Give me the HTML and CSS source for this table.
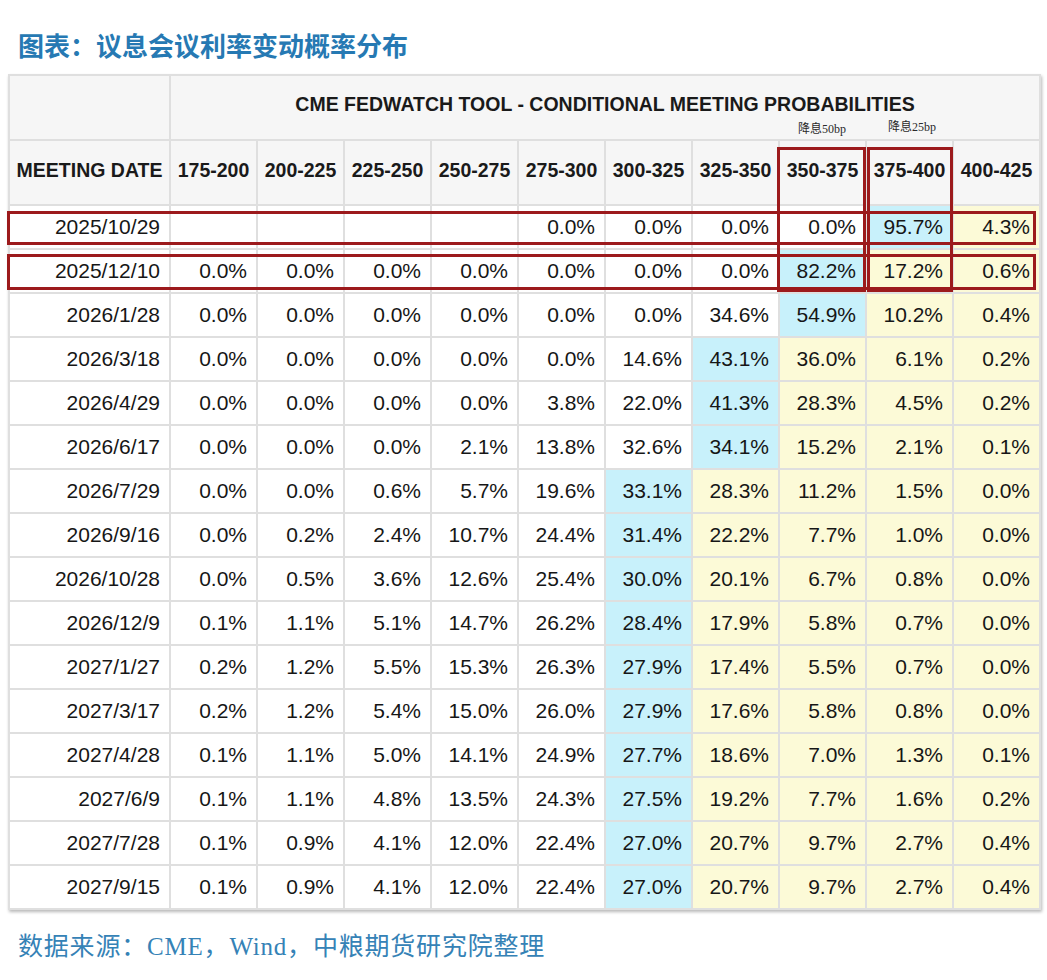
FILE: index.html
```html
<!DOCTYPE html>
<html lang="zh-CN">
<head>
<meta charset="utf-8">
<title>议息会议利率变动概率分布</title>
<link rel="stylesheet" href="styles.css">
</head>
<body>
<h1 class="title">图表：议息会议利率变动概率分布</h1>
<div class="chart">
  <div class="grid">
    <div class="hd hd-blank"></div>
    <div class="hd hd-main">CME FEDWATCH TOOL - CONDITIONAL MEETING PROBABILITIES</div>
    <div class="hd hd-col">MEETING DATE</div>
    <div class="hd hd-col">175-200</div>
    <div class="hd hd-col">200-225</div>
    <div class="hd hd-col">225-250</div>
    <div class="hd hd-col">250-275</div>
    <div class="hd hd-col">275-300</div>
    <div class="hd hd-col">300-325</div>
    <div class="hd hd-col">325-350</div>
    <div class="hd hd-col">350-375</div>
    <div class="hd hd-col">375-400</div>
    <div class="hd hd-col">400-425</div>

    <div class="cell">2025/10/29</div><div class="cell"></div><div class="cell"></div><div class="cell"></div><div class="cell"></div><div class="cell">0.0%</div><div class="cell">0.0%</div><div class="cell">0.0%</div><div class="cell">0.0%</div><div class="cell c">95.7%</div><div class="cell y">4.3%</div>
    <div class="cell">2025/12/10</div><div class="cell">0.0%</div><div class="cell">0.0%</div><div class="cell">0.0%</div><div class="cell">0.0%</div><div class="cell">0.0%</div><div class="cell">0.0%</div><div class="cell">0.0%</div><div class="cell c">82.2%</div><div class="cell y">17.2%</div><div class="cell y">0.6%</div>
    <div class="cell">2026/1/28</div><div class="cell">0.0%</div><div class="cell">0.0%</div><div class="cell">0.0%</div><div class="cell">0.0%</div><div class="cell">0.0%</div><div class="cell">0.0%</div><div class="cell">34.6%</div><div class="cell c">54.9%</div><div class="cell y">10.2%</div><div class="cell y">0.4%</div>
    <div class="cell">2026/3/18</div><div class="cell">0.0%</div><div class="cell">0.0%</div><div class="cell">0.0%</div><div class="cell">0.0%</div><div class="cell">0.0%</div><div class="cell">14.6%</div><div class="cell c">43.1%</div><div class="cell y">36.0%</div><div class="cell y">6.1%</div><div class="cell y">0.2%</div>
    <div class="cell">2026/4/29</div><div class="cell">0.0%</div><div class="cell">0.0%</div><div class="cell">0.0%</div><div class="cell">0.0%</div><div class="cell">3.8%</div><div class="cell">22.0%</div><div class="cell c">41.3%</div><div class="cell y">28.3%</div><div class="cell y">4.5%</div><div class="cell y">0.2%</div>
    <div class="cell">2026/6/17</div><div class="cell">0.0%</div><div class="cell">0.0%</div><div class="cell">0.0%</div><div class="cell">2.1%</div><div class="cell">13.8%</div><div class="cell">32.6%</div><div class="cell c">34.1%</div><div class="cell y">15.2%</div><div class="cell y">2.1%</div><div class="cell y">0.1%</div>
    <div class="cell">2026/7/29</div><div class="cell">0.0%</div><div class="cell">0.0%</div><div class="cell">0.6%</div><div class="cell">5.7%</div><div class="cell">19.6%</div><div class="cell c">33.1%</div><div class="cell y">28.3%</div><div class="cell y">11.2%</div><div class="cell y">1.5%</div><div class="cell y">0.0%</div>
    <div class="cell">2026/9/16</div><div class="cell">0.0%</div><div class="cell">0.2%</div><div class="cell">2.4%</div><div class="cell">10.7%</div><div class="cell">24.4%</div><div class="cell c">31.4%</div><div class="cell y">22.2%</div><div class="cell y">7.7%</div><div class="cell y">1.0%</div><div class="cell y">0.0%</div>
    <div class="cell">2026/10/28</div><div class="cell">0.0%</div><div class="cell">0.5%</div><div class="cell">3.6%</div><div class="cell">12.6%</div><div class="cell">25.4%</div><div class="cell c">30.0%</div><div class="cell y">20.1%</div><div class="cell y">6.7%</div><div class="cell y">0.8%</div><div class="cell y">0.0%</div>
    <div class="cell">2026/12/9</div><div class="cell">0.1%</div><div class="cell">1.1%</div><div class="cell">5.1%</div><div class="cell">14.7%</div><div class="cell">26.2%</div><div class="cell c">28.4%</div><div class="cell y">17.9%</div><div class="cell y">5.8%</div><div class="cell y">0.7%</div><div class="cell y">0.0%</div>
    <div class="cell">2027/1/27</div><div class="cell">0.2%</div><div class="cell">1.2%</div><div class="cell">5.5%</div><div class="cell">15.3%</div><div class="cell">26.3%</div><div class="cell c">27.9%</div><div class="cell y">17.4%</div><div class="cell y">5.5%</div><div class="cell y">0.7%</div><div class="cell y">0.0%</div>
    <div class="cell">2027/3/17</div><div class="cell">0.2%</div><div class="cell">1.2%</div><div class="cell">5.4%</div><div class="cell">15.0%</div><div class="cell">26.0%</div><div class="cell c">27.9%</div><div class="cell y">17.6%</div><div class="cell y">5.8%</div><div class="cell y">0.8%</div><div class="cell y">0.0%</div>
    <div class="cell">2027/4/28</div><div class="cell">0.1%</div><div class="cell">1.1%</div><div class="cell">5.0%</div><div class="cell">14.1%</div><div class="cell">24.9%</div><div class="cell c">27.7%</div><div class="cell y">18.6%</div><div class="cell y">7.0%</div><div class="cell y">1.3%</div><div class="cell y">0.1%</div>
    <div class="cell">2027/6/9</div><div class="cell">0.1%</div><div class="cell">1.1%</div><div class="cell">4.8%</div><div class="cell">13.5%</div><div class="cell">24.3%</div><div class="cell c">27.5%</div><div class="cell y">19.2%</div><div class="cell y">7.7%</div><div class="cell y">1.6%</div><div class="cell y">0.2%</div>
    <div class="cell">2027/7/28</div><div class="cell">0.1%</div><div class="cell">0.9%</div><div class="cell">4.1%</div><div class="cell">12.0%</div><div class="cell">22.4%</div><div class="cell c">27.0%</div><div class="cell y">20.7%</div><div class="cell y">9.7%</div><div class="cell y">2.7%</div><div class="cell y">0.4%</div>
    <div class="cell">2027/9/15</div><div class="cell">0.1%</div><div class="cell">0.9%</div><div class="cell">4.1%</div><div class="cell">12.0%</div><div class="cell">22.4%</div><div class="cell c">27.0%</div><div class="cell y">20.7%</div><div class="cell y">9.7%</div><div class="cell y">2.7%</div><div class="cell y">0.4%</div>
  </div>

  <span class="note note-50">降息50bp</span>
  <span class="note note-25">降息25bp</span>
  <div class="box box-row1"></div>
  <div class="box box-row2"></div>
  <div class="box box-col1"></div>
  <div class="box box-col2"></div>
</div>
<p class="source">数据来源：CME，Wind，中粮期货研究院整理</p>
</body>
</html>
```

FILE: styles.css
```css
html, body {
  margin: 0;
  padding: 0;
  background: #ffffff;
}

body {
  width: 1047px;
}

.title {
  margin: 0;
  padding: 28px 0 0 18px;
  font-family: "Noto Sans CJK SC", "Noto Sans", sans-serif;
  font-size: 26px;
  line-height: 34px;
  font-weight: 700;
  color: #2679b3;
}

.chart {
  position: relative;
  margin: 12px 0 0 8px;
  width: 1033px;
  box-shadow: 1px 2px 3px rgba(0, 0, 0, 0.28);
}

.grid {
  display: grid;
  grid-template-columns: 159px repeat(10, 85px);
  grid-template-rows: 63px 63px;
  grid-auto-rows: 42px;
  gap: 2px;
  padding: 2px;
  background: #dfdfdf;
  font-family: "Liberation Sans", Arial, sans-serif;
  color: #161616;
}

.hd {
  background: #f6f6f6;
  font-weight: 700;
  font-size: 19.5px;
  display: flex;
  align-items: center;
  justify-content: center;
  white-space: nowrap;
  color: #1a1a1a;
}

.hd-main {
  grid-column: 2 / span 10;
  padding-bottom: 6px;
  box-sizing: border-box;
}

.hd-col {
  padding-bottom: 4px;
  box-sizing: border-box;
}

.cell {
  background: #ffffff;
  font-size: 21px;
  display: flex;
  align-items: center;
  justify-content: flex-end;
  padding-right: 9px;
  white-space: nowrap;
}

.cell.c {
  background: #c8f1fb;
}

.cell.y {
  background: #fcfad7;
}

.note {
  position: absolute;
  font-family: "Liberation Serif", "Noto Sans CJK SC", serif;
  font-size: 12px;
  line-height: 14px;
  color: #2a2a2a;
  white-space: nowrap;
}

.note-50 {
  left: 790px;
  top: 48px;
}

.note-25 {
  left: 880px;
  top: 46px;
}

.box {
  position: absolute;
  border: 3px solid #9c1a1c;
  box-sizing: border-box;
}

.box-row1 {
  left: -1px;
  top: 137px;
  width: 1029px;
  height: 34px;
}

.box-row2 {
  left: -1px;
  top: 180px;
  width: 1029px;
  height: 36px;
}

.box-col1 {
  left: 769px;
  top: 73px;
  width: 89px;
  height: 145px;
}

.box-col2 {
  left: 859px;
  top: 73px;
  width: 86px;
  height: 145px;
}

.source {
  margin: 20px 0 0 0;
  padding-left: 18px;
  font-family: "Liberation Serif", "Noto Sans CJK SC", serif;
  font-size: 25px;
  line-height: 34px;
  letter-spacing: 0.8px;
  color: #3582b6;
}
```
